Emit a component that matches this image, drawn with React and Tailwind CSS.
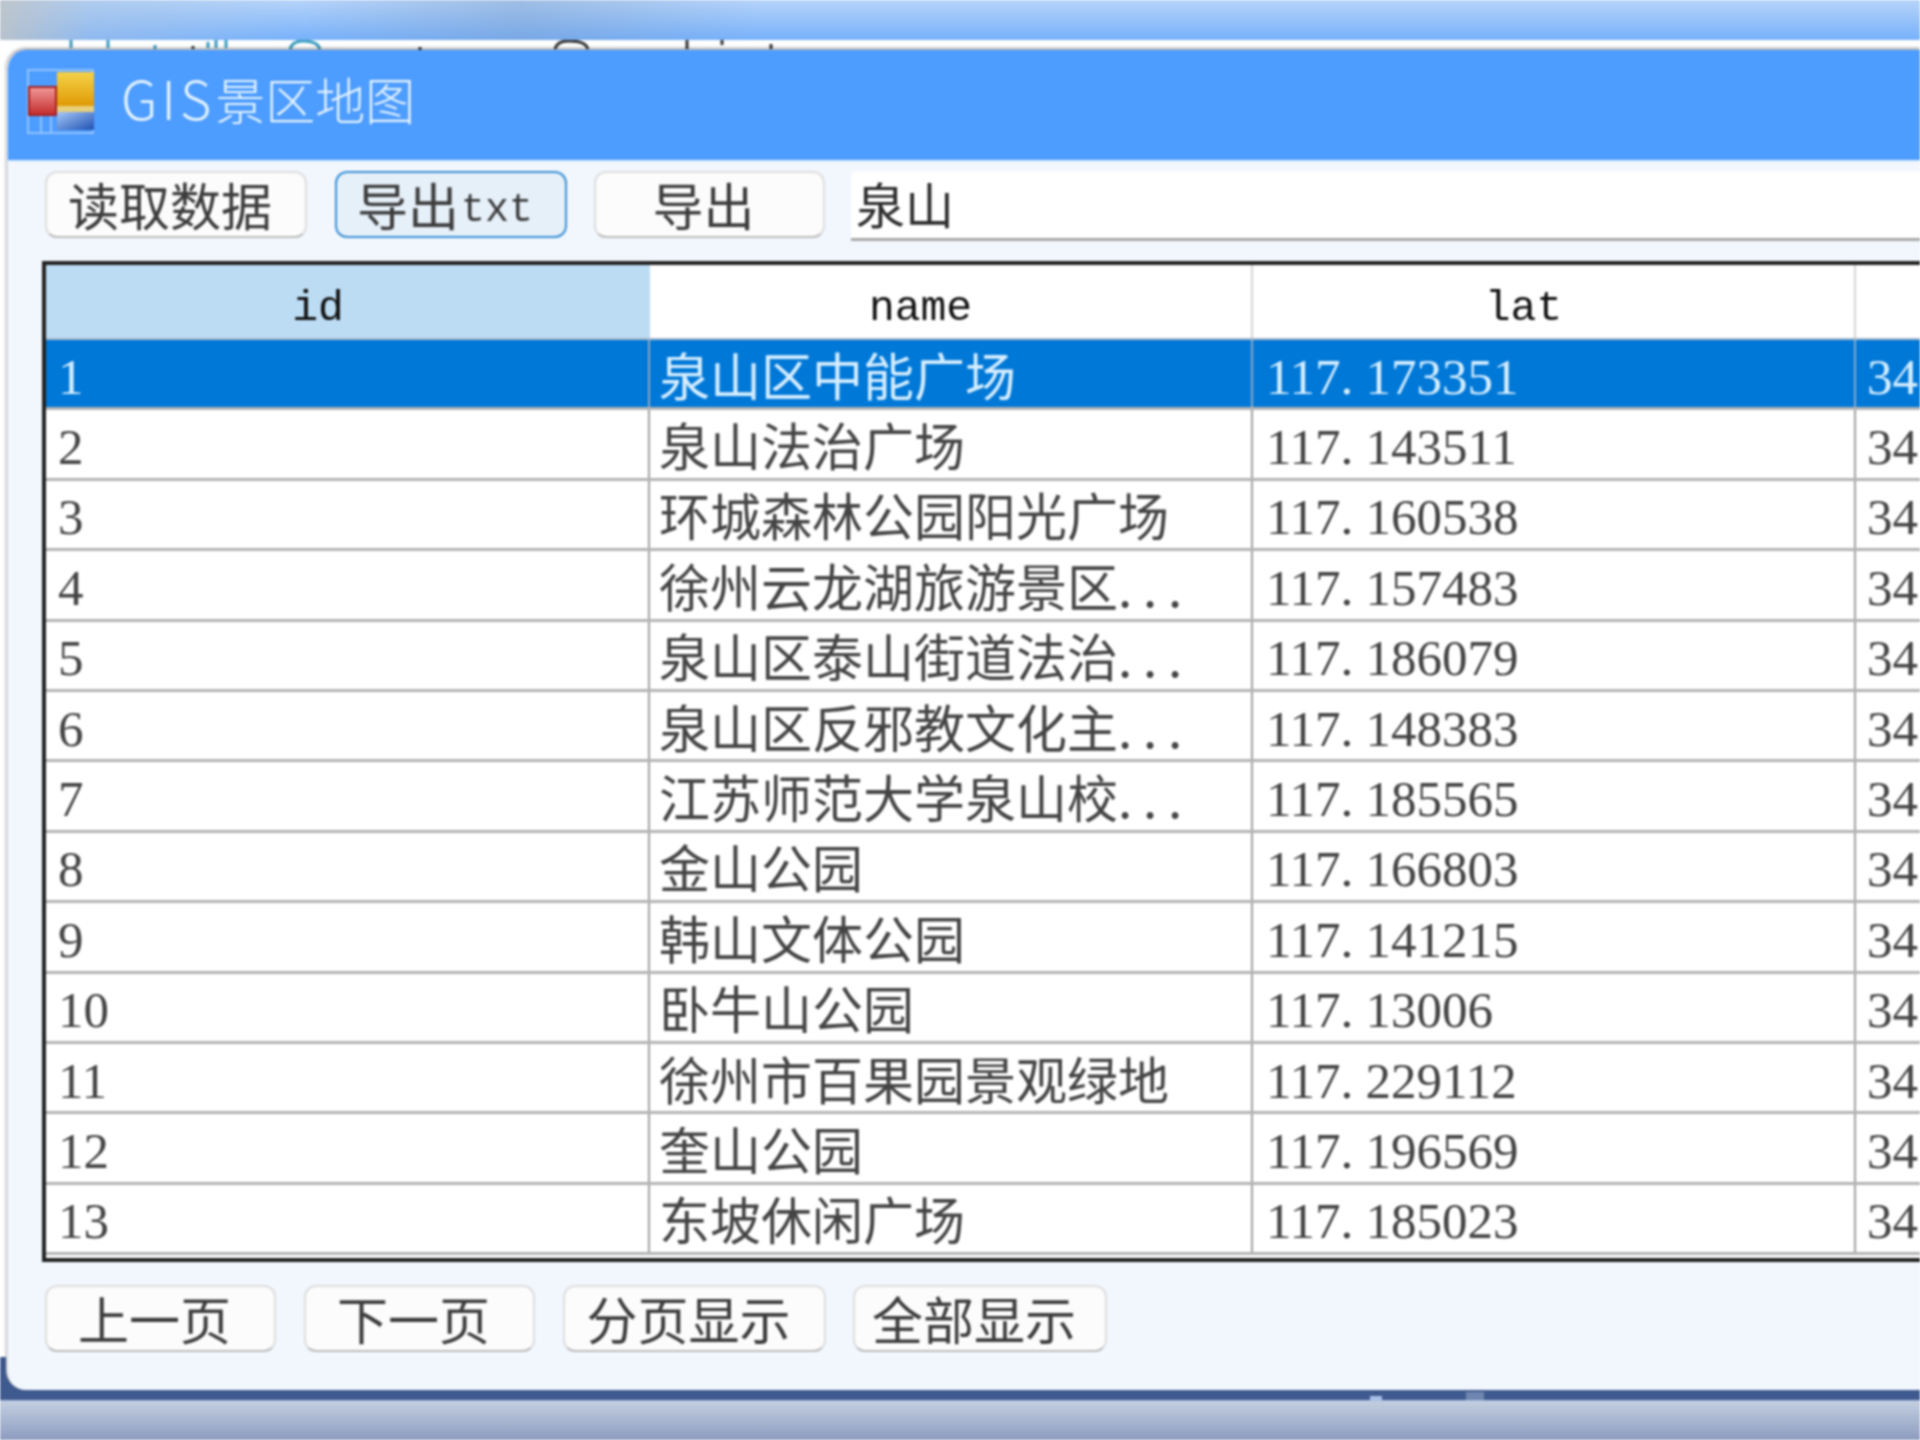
import React from "react";

const rows = [
  ["1", "泉山区中能广场", "117.173351"],
  ["2", "泉山法治广场", "117.143511"],
  ["3", "环城森林公园阳光广场", "117.160538"],
  ["4", "徐州云龙湖旅游景区...", "117.157483"],
  ["5", "泉山区泰山街道法治...", "117.186079"],
  ["6", "泉山区反邪教文化主...", "117.148383"],
  ["7", "江苏师范大学泉山校...", "117.185565"],
  ["8", "金山公园", "117.166803"],
  ["9", "韩山文体公园", "117.141215"],
  ["10", "卧牛山公园", "117.13006"],
  ["11", "徐州市百果园景观绿地", "117.229112"],
  ["12", "奎山公园", "117.196569"],
  ["13", "东坡休闲广场", "117.185023"],
];

// the period sits in a full half-width cell, like the grid's bitmap font
const Dotted = ({ text }) =>
  text.split(/(\.)/).map((part, i) =>
    part === "." ? (
      <span key={i} className="inline-block w-[25px]">.</span>
    ) : (
      <span key={i}>{part}</span>
    )
  );

const Logo = () => (
  <svg width="67" height="65" viewBox="0 0 67 65" className="shrink-0">
    <defs>
      <linearGradient id="yellow" x1="0" y1="0" x2="0" y2="1">
        <stop offset="0" stopColor="#f5d24a" />
        <stop offset="1" stopColor="#e09a05" />
      </linearGradient>
      <linearGradient id="blue" x1="0" y1="0" x2="1" y2="1">
        <stop offset="0" stopColor="#a5c8fa" />
        <stop offset="1" stopColor="#1f50b0" />
      </linearGradient>
      <linearGradient id="red" x1="0" y1="0" x2="0" y2="1">
        <stop offset="0" stopColor="#f09a98" />
        <stop offset="1" stopColor="#c42c2c" />
      </linearGradient>
    </defs>
    <rect x="1" y="1" width="65" height="63" fill="none" stroke="#8fc4fb" strokeWidth="2" />
    <path d="M14 46V64M24 46V64" fill="none" stroke="#8fc4fb" strokeWidth="2" />
    <rect x="30" y="3" width="37" height="34" fill="url(#yellow)" />
    <rect x="30" y="37" width="37" height="6" fill="#e8cf7a" />
    <rect x="30" y="43" width="37" height="18" fill="url(#blue)" />
    <rect x="2" y="18" width="27" height="28" fill="url(#red)" stroke="#a8201f" strokeWidth="2" />
  </svg>
);

// bits of the window behind, cut off by this one
const BehindStrip = () => (
  <svg width="1920" height="10" viewBox="0 0 1920 10" className="block">
    <g fill="none" strokeWidth="3" stroke="#3a9cc0">
      <path d="M71 0V8M108 0V8M155 5V9M208 2V8M216 0V8M226 0V8M290 9C292 2 298 1 303 1C310 1 318 2 320 9" />
    </g>
    <g fill="none" strokeWidth="3" stroke="#333333">
      <path d="M193 6V9M420 7V10M555 9C557 2 563 1 570 1C578 1 586 2 588 9M687 0V9M722 0V5M771 4V9" />
    </g>
  </svg>
);

const Button = ({ className, active, children }) => (
  <button
    className={
      "flex h-[67px] shrink-0 items-center justify-center rounded-[12px] border-2 pr-[12px] text-[51px] leading-none text-[#3c3c3c] " +
      (active
        ? "border-[#3a90d4] bg-[#e6f0f9] "
        : "border-[#dedede] border-b-[#bcbcbc] bg-[#fcfcfc] ") +
      className
    }
  >
    {children}
  </button>
);

const HeaderCell = ({ className, label }) => (
  <div className={"flex items-center justify-center pr-[60px] pt-[14px] " + className}>
    <span className="font-['Liberation_Mono',monospace] text-[43px] leading-none text-[#111]">{label}</span>
  </div>
);

const Row = ({ row, selected }) => {
  const text = selected ? "text-[#d6eeff]" : "text-[#444]";
  const line = selected ? "border-[#8aa8c4]" : "border-[#a0a0a0]";
  const num = "pt-[7px] font-['Liberation_Serif',serif] text-[51px] leading-none";
  return (
    <div className={"flex h-[70.4px] shrink-0 items-stretch border-b-[3px] border-[#b4b4b4] " + text + (selected ? " bg-[#0078d7]" : " bg-white")}>
      <div className={"flex w-[604px] items-center border-r-2 pl-[12px] " + line}>
        <span className={num}>{row[0]}</span>
      </div>
      <div className={"flex w-[603px] items-center border-r-2 pl-[9px] " + line}>
        <span className="whitespace-nowrap pt-[1px] text-[51px] leading-none">
          {row[1].endsWith("...") ? (
            <>
              {row[1].slice(0, -3)}
              <Dotted text="..." />
            </>
          ) : (
            row[1]
          )}
        </span>
      </div>
      <div className={"flex w-[603px] items-center border-r-2 pl-[13px] " + line}>
        <span className={"whitespace-nowrap " + num}>
          <Dotted text={row[2]} />
        </span>
      </div>
      <div className="flex flex-1 items-center pl-[11px]">
        <span className={num}>34</span>
      </div>
    </div>
  );
};

export default function App() {
  return (
    <div className="flex h-[1440px] w-[1920px] flex-col overflow-hidden bg-white font-['Noto_Sans_CJK_SC',sans-serif] blur-[1px]">
      {/* desktop above the window */}
      <div className="h-[40px] shrink-0 bg-[linear-gradient(to_right,rgba(190,196,200,0.9)_0,rgba(170,195,225,0.45)_90px,rgba(180,212,250,0)_300px,rgba(120,150,190,0.35)_520px,rgba(180,212,250,0)_760px),linear-gradient(to_bottom,#b6d4fa,#77b1fb)]" />

      <div className="relative flex h-[1360px] shrink-0 flex-col bg-[linear-gradient(to_bottom,#fff_0,#fff_1317px,#3f5a8e_1317px)]">
        <BehindStrip />
        <div className="ml-[6px] flex h-[1340px] w-[1914px] flex-col overflow-hidden rounded-l-[20px] border-l-2 border-[#d6d8dc] bg-[#f2f7fe] shadow-[0_-2px_3px_rgba(0,0,0,0.35)]">
          {/* title bar */}
          <div className="flex h-[112px] shrink-0 items-center gap-[27px] border-b-2 border-[#d9ecff] bg-[#4d9cff] pb-[7px] pl-[19px]">
            <Logo />
            <span className="-translate-y-[5px] text-[50px] font-light leading-none text-[#e4f3ff]">
              <span className="text-[54px] tracking-[4px]">GIS</span>景区地图
            </span>
          </div>

          {/* toolbar */}
          <div className="flex h-[99px] shrink-0 items-start pl-[37px] pt-[9px]">
            <Button className="w-[262px]">读取数据</Button>
            <Button active className="ml-[28px] w-[232px]">
              导出
              <span className="ml-[2px] inline-block translate-y-[6px] font-['Liberation_Mono',monospace] text-[40px]">txt</span>
            </Button>
            <Button className="ml-[27px] w-[231px]">导出</Button>
            <div className="ml-[26px] flex h-[70px] flex-1 items-center rounded-tl-[6px] border-b-[3px] border-[#a8a8a8] bg-white pl-[5px]">
              <span className="-translate-y-[2px] text-[49px] leading-none text-[#2c2c2c]">泉山</span>
            </div>
          </div>

          {/* data grid */}
          <div className="ml-[34px] flex h-[1001px] shrink-0 flex-col overflow-hidden border-y-4 border-l-4 border-[#222] bg-white">
            <div className="flex h-[75px] shrink-0 items-stretch border-b-2 border-[#a8b8c8]">
              <HeaderCell className="w-[604px] bg-[#bcdcf4]" label="id" />
              <HeaderCell className="w-[603px] border-r-2 border-[#d4d4d4]" label="name" />
              <HeaderCell className="w-[603px] border-r-2 border-[#d4d4d4]" label="lat" />
              <div className="flex-1" />
            </div>
            {rows.map((row, i) => (
              <Row key={row[0]} row={row} selected={i === 0} />
            ))}
          </div>

          {/* pager */}
          <div className="mt-[23px] flex pl-[37px]">
            <Button className="w-[231px]">上一页</Button>
            <Button className="ml-[28px] w-[231px]">下一页</Button>
            <Button className="ml-[28px] w-[263px]">分页显示</Button>
            <Button className="ml-[27px] w-[254px]">全部显示</Button>
          </div>
        </div>
        <div className="absolute bottom-0 left-[1370px] h-[4px] w-[12px] bg-[#a9c0ea]" />
        <div className="absolute bottom-0 left-[1466px] h-[8px] w-[18px] bg-[#6f86b0]" />
      </div>

      {/* desktop below the window */}
      <div className="h-[40px] shrink-0 border-t border-[#a9bbe2] bg-[linear-gradient(to_bottom,#c3cfe0,#8d9cc0)]" />
    </div>
  );
}
